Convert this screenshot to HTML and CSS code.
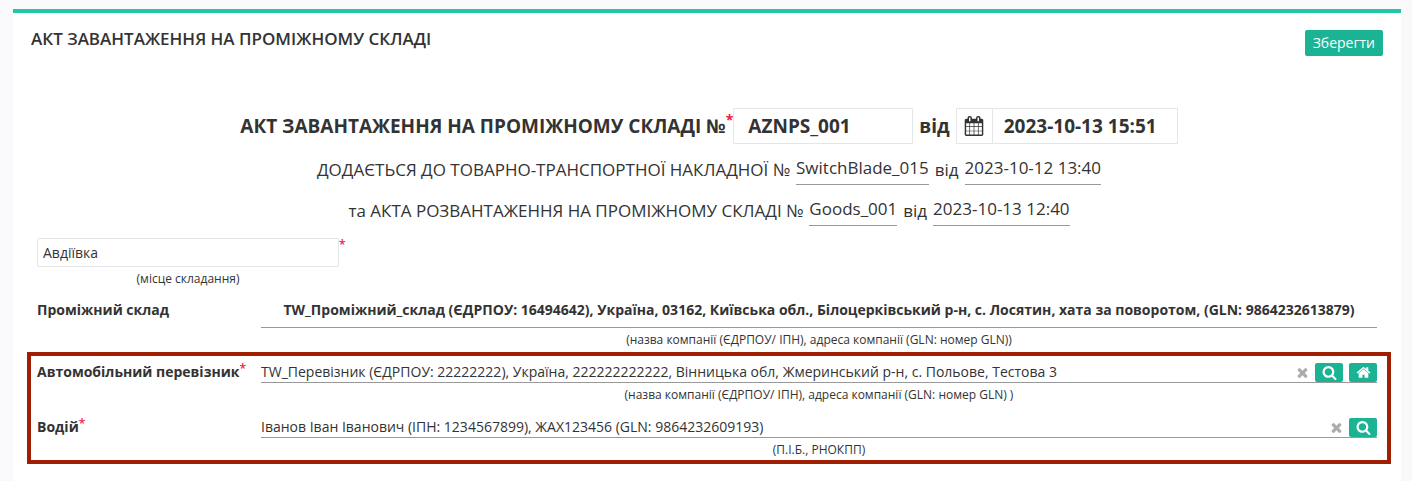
FILE: index.html
```html
<!DOCTYPE html>
<html lang="uk">
<head>
<meta charset="utf-8">
<title>Акт завантаження на проміжному складі</title>
<link rel="stylesheet" href="styles.css">
</head>
<body>
<svg class="sprite" aria-hidden="true">
  <symbol id="search" viewBox="0 0 1664 1792"><path d="M1152 832q0-185-131.500-316.500t-316.500-131.500-316.500 131.500-131.500 316.500 131.500 316.500 316.500 131.500 316.500-131.500 131.500-316.500zm512 832q0 52-38 90t-90 38q-54 0-90-38l-343-342q-179 124-399 124-143 0-273.500-55.500t-225-150-150-225-55.500-273.500 55.500-273.500 150-225 225-150 273.500-55.500 273.500 55.500 225 150 150 225 55.500 273.500q0 220-124 399l343 343q37 37 37 90z"/></symbol>
  <symbol id="home" viewBox="0 0 1664 1792"><path d="M1408 992v480q0 26-19 45t-45 19h-384v-384h-256v384h-384q-26 0-45-19t-19-45v-480q0-1 .5-3t.5-3l575-474 575 474q1 2 1 6zm223-69l-62 74q-8 9-21 11h-3q-13 0-21-7l-692-577-692 577q-12 8-24 7-13-2-21-11l-62-74q-8-10-7-23.500t11-21.500l719-599q32-26 76-26t76 26l244 204v-195q0-14 9-23t23-9h192q14 0 23 9t9 23v408l219 182q10 8 11 21.500t-7 23.500z"/></symbol>
  <symbol id="times" viewBox="0 0 1408 1792"><path d="M1298 1322q0 40-28 68l-136 136q-28 28-68 28t-68-28l-294-294-294 294q-28 28-68 28t-68-28l-136-136q-28-28-28-68t28-68l294-294-294-294q-28-28-28-68t28-68l136-136q28-28 68-28t68 28l294 294 294-294q28-28 68-28t68 28l136 136q28 28 28 68t-28 68l-294 294 294 294q28 28 28 68z"/></symbol>
  <symbol id="calendar" viewBox="0 0 1664 1792"><path d="M128 1664h288v-288h-288v288zm352 0h320v-288h-320v288zm-352-352h288v-320h-288v320zm352 0h320v-320h-320v320zm-352-384h288v-288h-288v288zm736 736h320v-288h-320v288zm-384-736h320v-288h-320v288zm768 736h288v-288h-288v288zm-384-352h320v-320h-320v320zm-352-864v-288q0-13-9.500-22.500t-22.500-9.500h-64q-13 0-22.500 9.500t-9.500 22.500v288q0 13 9.500 22.500t22.500 9.500h64q13 0 22.500-9.500t9.500-22.500zm736 864h288v-320h-288v320zm-384-384h320v-288h-320v288zm384 0h288v-288h-288v288zm32-480v-288q0-13-9.500-22.500t-22.500-9.500h-64q-13 0-22.500 9.500t-9.500 22.500v288q0 13 9.500 22.500t22.500 9.500h64q13 0 22.500-9.500t9.500-22.500zm384-64v1280q0 52-38 90t-90 38h-1408q-52 0-90-38t-38-90v-1280q0-52 38-90t90-38h128v-96q0-66 47-113t113-47h64q66 0 113 47t47 113v96h384v-96q0-66 47-113t113-47h64q66 0 113 47t47 113v96h128q52 0 90 38t38 90z"/></symbol>
</svg>
<main class="card">
  <header class="card-head">
    <h1 class="card-title">АКТ ЗАВАНТАЖЕННЯ НА ПРОМІЖНОМУ СКЛАДІ</h1>
    <button class="save" type="submit" form="act">Зберегти</button>
  </header>
  <form class="form" id="act">
    <div class="heading">
      <label for="number">АКТ ЗАВАНТАЖЕННЯ НА ПРОМІЖНОМУ СКЛАДІ №</label><span class="required">*</span>
      <input class="heading-input" id="number" type="text" value="AZNPS_001">
      <label class="heading-from" for="date">від</label>
      <div class="date-group">
        <button class="date-button" type="button" aria-label="Календар"><svg class="icon-calendar"><use href="#calendar"/></svg></button>
        <input class="date-input" id="date" type="text" value="2023-10-13 15:51">
      </div>
    </div>
    <p class="related"><span>ДОДАЄТЬСЯ ДО ТОВАРНО-ТРАНСПОРТНОЇ НАКЛАДНОЇ №</span><span class="ref">SwitchBlade_015</span><span>від</span><span class="ref">2023-10-12 13:40</span></p>
    <p class="related"><span>та АКТА РОЗВАНТАЖЕННЯ НА ПРОМІЖНОМУ СКЛАДІ №</span><span class="ref">Goods_001</span><span>від</span><span class="ref">2023-10-13 12:40</span></p>
    <div class="place">
      <div class="place-field">
        <input class="place-input" id="place" type="text" value="Авдіївка">
        <label class="hint" for="place">(місце складання)</label>
      </div>
      <span class="required required-small">*</span>
    </div>
    <div class="row row-warehouse">
      <div class="label">Проміжний склад</div>
      <div class="field">
        <div class="warehouse">TW_Проміжний_склад (ЄДРПОУ: 16494642), Україна, 03162, Київська обл., Білоцерківський р-н, с. Лосятин, хата за поворотом, (GLN: 9864232613879)</div>
        <div class="hint">(назва компанії (ЄДРПОУ/ ІПН), адреса компанії (GLN: номер GLN))</div>
      </div>
    </div>
    <div class="highlight">
      <div class="row">
        <label class="label" for="carrier">Автомобільний перевізник<span class="required required-small">*</span></label>
        <div class="field">
          <div class="lookup">
            <input class="lookup-input" id="carrier" type="text" value="TW_Перевізник (ЄДРПОУ: 22222222), Україна, 222222222222, Вінницька обл, Жмеринський р-н, с. Польове, Тестова 3">
            <button class="clear" type="button" aria-label="Очистити"><svg class="icon"><use href="#times"/></svg></button>
            <button class="action" type="button" aria-label="Пошук"><svg class="icon"><use href="#search"/></svg></button>
            <button class="action" type="button" aria-label="Моя компанія"><svg class="icon"><use href="#home"/></svg></button>
          </div>
          <div class="hint">(назва компанії (ЄДРПОУ/ ІПН), адреса компанії (GLN: номер GLN) )</div>
        </div>
      </div>
      <div class="row">
        <label class="label" for="driver">Водій<span class="required required-small">*</span></label>
        <div class="field">
          <div class="lookup">
            <input class="lookup-input" id="driver" type="text" value="Іванов Іван Іванович (ІПН: 1234567899), ЖАХ123456 (GLN: 9864232609193)">
            <button class="clear" type="button" aria-label="Очистити"><svg class="icon"><use href="#times"/></svg></button>
            <button class="action" type="button" aria-label="Пошук"><svg class="icon"><use href="#search"/></svg></button>
          </div>
          <div class="hint">(П.І.Б., РНОКПП)</div>
        </div>
      </div>
    </div>
  </form>
</main>
</body>
</html>
```
FILE: styles.css
```css
* { box-sizing: border-box; }
html { background: #f9f9fb; }
body {
  margin: 0;
  padding: 9px 11px 0 13px;
  min-height: 100vh;
  display: flex;
  flex-direction: column;
  font: 14px/20px "Open Sans", "Noto Sans", sans-serif;
  color: #333;
}
input, button { font: inherit; color: inherit; margin: 0; }
button { cursor: pointer; border: 0; padding: 0; }
.sprite { display: none; }
.card { flex: 1; background: #fff; border-top: 4px solid #23c6a8; }
.card-head {
  display: flex;
  align-items: flex-start;
  justify-content: space-between;
  padding: 16px 18px 0;
}
.card-title { margin: 0; font-size: 17px; line-height: 20px; font-weight: 600; }
.save {
  height: 26px;
  margin-top: 1px;
  padding: 0 8px;
  border-radius: 2px;
  background: #1ab394;
  color: #fff;
}
.form { padding: 52px 10px 16px 14px; }
.heading {
  display: flex;
  align-items: center;
  justify-content: center;
  font-size: 19px;
  line-height: 36px;
  font-weight: 700;
}
.heading-input, .date-group { height: 36px; border: 1px solid #e5e6e7; background: #fff; }
.heading-input { width: 180px; padding: 0 14px; border-radius: 1px; }
.heading-from { margin: 0 6px; }
.date-group { display: flex; }
.date-button { width: 36px; background: #fff; border-right: 1px solid #e5e6e7; }
.date-input { width: 184px; border: 0; padding: 0 11px; }
.icon-calendar { display: block; width: 20px; height: 20px; margin: 0 auto; fill: #333; }
.required { color: #ed1c40; font-weight: 700; align-self: flex-start; font-size: 14px; line-height: 24px; }
.required-small { font-size: 12px; line-height: 14px; vertical-align: top; font-weight: 600; }
.related {
  display: flex;
  justify-content: center;
  gap: 6px;
  margin: 8px 0 0;
  font-size: 17px;
  line-height: 31px;
}
.related > span { padding-top: 2px; }
.related > .ref { padding: 0; border-bottom: 1px solid #999; }
.place { display: flex; padding-left: 10px; margin-top: 12px; }
.place-field { width: 302px; }
.place-input {
  display: block;
  width: 100%;
  height: 29px;
  padding: 0 5px;
  border: 1px solid #e5e6e7;
  border-radius: 2px;
  background: #fff;
}
.hint { display: block; padding-top: 3px; text-align: center; font-size: 12px; line-height: 18px; }
.row { display: grid; grid-template-columns: 224px minmax(0, 1fr); }
.row-warehouse { padding: 12px 14px 0 10px; }
.label { font-weight: 700; }
.warehouse { padding-bottom: 7px; border-bottom: 1px solid #999; text-align: center; font-weight: 700; }
.highlight { margin-top: 3px; padding: 6px 10px 1px 6px; border: 4px solid #a01f00; }
.highlight .row + .row { margin-top: 13px; }
.lookup { display: flex; align-items: flex-end; gap: 6px; border-bottom: 1px solid #999; }
.lookup-input { flex: 1; min-width: 0; height: 20px; padding: 0; border: 0; background: none; }
.clear { width: 14px; height: 19px; background: none; }
.action { width: 28px; height: 19px; border-radius: 2px; background: #1ab394; }
.icon { display: block; width: 15px; height: 15px; margin: 0 auto; fill: #fff; }
.clear .icon { fill: #aaadb0; }
```
